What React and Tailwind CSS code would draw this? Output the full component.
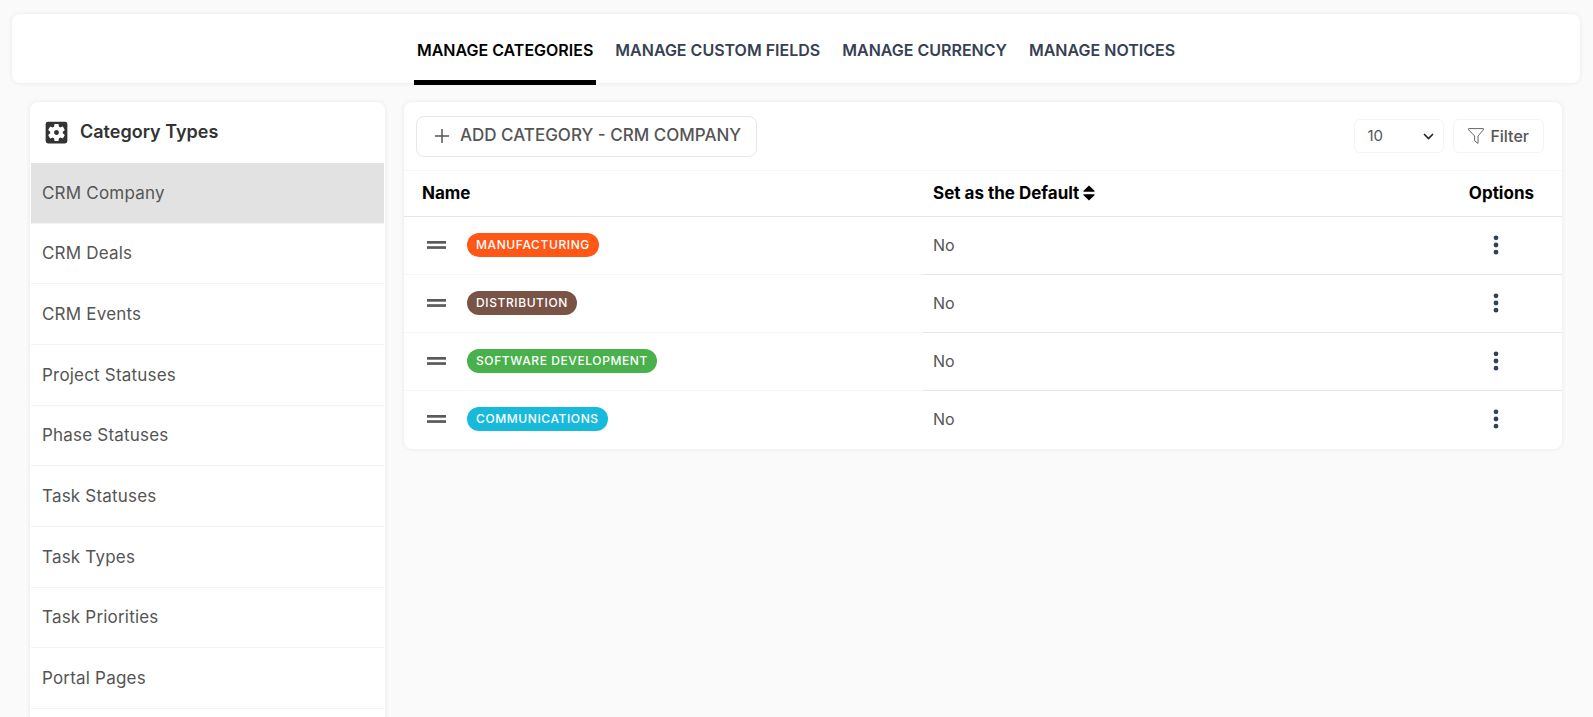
import { AiOutlinePlus } from 'react-icons/ai';
import { HiDotsVertical } from 'react-icons/hi';
import { MdSettingsApplications } from 'react-icons/md';

const tabs = ['Manage Categories', 'Manage Custom Fields', 'Manage Currency', 'Manage Notices'];

const categoryTypes = [
  'CRM Company',
  'CRM Deals',
  'CRM Events',
  'Project Statuses',
  'Phase Statuses',
  'Task Statuses',
  'Task Types',
  'Task Priorities',
  'Portal Pages',
];

const categories = [
  { name: 'Manufacturing', color: 'bg-[#ff5716]', isDefault: 'No' },
  { name: 'Distribution', color: 'bg-[#795345]', isDefault: 'No' },
  { name: 'Software Development', color: 'bg-[#48b14b]', isDefault: 'No' },
  { name: 'Communications', color: 'bg-[#18badb]', isDefault: 'No' },
];

function DragHandle() {
  return (
    <svg width="19" height="8" viewBox="0 0 19 8" fill="#5a5a5a" aria-hidden="true">
      <rect width="19" height="2.7" />
      <rect y="5.2" width="19" height="2.7" />
    </svg>
  );
}

function SortIcon() {
  return (
    <svg width="12" height="16" viewBox="0 0 12 16" fill="currentColor" aria-hidden="true">
      <path d="M6 .5 11.5 5.7V6.8H.5V5.7zM6 15.5.5 10.3V9.2h11v1.1z" />
    </svg>
  );
}

function FunnelIcon() {
  return (
    <svg width="16" height="16" viewBox="0 0 16 16" fill="none" stroke="#666" strokeLinejoin="round" aria-hidden="true">
      <path d="M.6 .6h14.8v1.2L10 8v7.4L6.6 12.8V8L.6 1.8z" />
    </svg>
  );
}

function Card({ className, children }) {
  return (
    <div className={`rounded-lg bg-white shadow-[0_0_5px_rgba(0,0,0,0.08)] ${className}`}>{children}</div>
  );
}

export default function App() {
  return (
    <div className="h-screen overflow-hidden bg-[#fafafa] px-3 pt-[14px] font-['Inter',sans-serif] text-[#555]">
      <Card className="mr-px">
        <nav className="flex h-[69px] justify-center gap-4">
          {tabs.map((tab, i) => (
            <a
              key={tab}
              href="#"
              className={`h-[71px] border-b-[5px] px-[3px] pt-6 text-base font-semibold uppercase ${
                i === 0 ? 'border-black text-black' : 'border-transparent text-gray-700'
              }`}
            >
              {tab}
            </a>
          ))}
        </nav>
      </Card>

      <div className="mt-[19px] flex items-start gap-[19px] pr-[19px] pl-[18px]">
        <Card className="w-[355px] shrink-0 pb-20">
          <div className="flex h-[61px] items-center gap-[9px] px-3 text-[#333]">
            <MdSettingsApplications size={29} />
            <h2 className="pb-0.5 text-lg font-semibold">Category Types</h2>
          </div>
          <ul className="grid min-h-[546px] auto-rows-fr px-px">
            {categoryTypes.map((type, i) => (
              <li key={type} className="flex border-b border-[#f3f3f3]">
                <a
                  href="#"
                  className={`flex flex-1 items-center px-[11px] pt-px text-[17px] tracking-[0.2px] ${i === 0 ? 'bg-[#e2e2e2]' : ''}`}
                >
                  {type}
                </a>
              </li>
            ))}
          </ul>
        </Card>

        <Card className="flex-1 pb-px">
          <div className="flex h-[69px] items-center border-b border-[#f6f6f6] pr-[18px] pl-3">
            <button className="flex h-[41px] items-center gap-2 rounded-lg border border-gray-200 px-[15px] text-[17px] font-medium uppercase">
              <AiOutlinePlus size={20} />
              Add Category - CRM Company
            </button>
            <div className="relative ml-auto">
              <select
                aria-label="Rows per page"
                defaultValue="10"
                className="h-[34px] w-[90px] appearance-none rounded-md border border-gray-100 pt-px pl-3 text-[15px]"
              >
                <option>10</option>
                <option>25</option>
                <option>50</option>
              </select>
              <svg
                className="pointer-events-none absolute top-3 right-[10px]"
                width="11"
                height="11"
                viewBox="0 0 11 11"
                fill="none"
                stroke="#222"
                strokeWidth="1.6"
                aria-hidden="true"
              >
                <path d="m1 3 4.5 4.5L10 3" />
              </svg>
            </div>
            <button className="ml-[9px] flex h-[34px] items-center gap-[6px] rounded-md border border-gray-100 px-[14px] text-base font-medium">
              <FunnelIcon />
              Filter
            </button>
          </div>

          <table className="w-full table-fixed">
            <thead>
              <tr className="h-[45px] border-b border-gray-200 text-left text-[17px] text-black">
                <th className="w-[519px] pl-[18px] font-bold">Name</th>
                <th className="pl-[10px] font-bold">
                  <span className="flex items-center gap-1">
                    Set as the Default
                    <SortIcon />
                  </span>
                </th>
                <th className="w-[140px] pr-7 text-right font-bold">Options</th>
              </tr>
            </thead>
            <tbody>
              {categories.map((category) => (
                <tr key={category.name} className="group h-[58px]">
                  <td className="border-b border-[#f6f6f6] pl-[23px] group-last:border-0">
                    <div className="flex items-center gap-[21px]">
                      <DragHandle />
                      <span
                        className={`rounded-full px-[9px] text-xs leading-6 font-medium tracking-wider text-white uppercase ${category.color}`}
                      >
                        {category.name}
                      </span>
                    </div>
                  </td>
                  <td className="border-b border-gray-200 pl-[10px] text-base group-last:border-0">
                    {category.isDefault}
                  </td>
                  <td className="border-b border-gray-200 pr-[54px] group-last:border-0">
                    <button aria-label={`Options for ${category.name}`} className="ml-auto block text-slate-700">
                      <HiDotsVertical size={24} />
                    </button>
                  </td>
                </tr>
              ))}
            </tbody>
          </table>
        </Card>
      </div>
    </div>
  );
}
